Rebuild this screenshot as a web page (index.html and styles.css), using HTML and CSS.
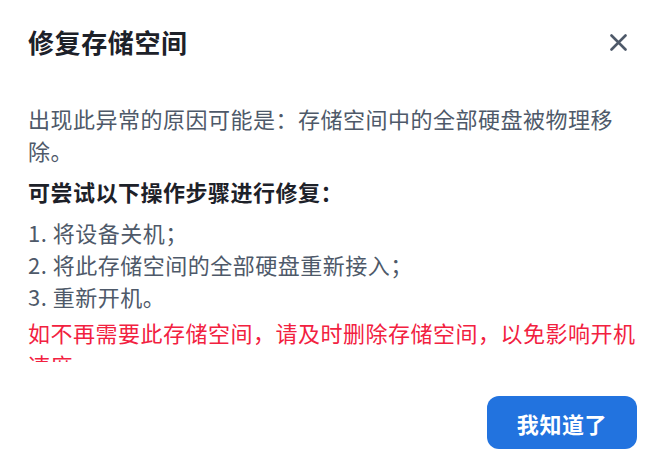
FILE: index.html
```html
<!DOCTYPE html>
<html lang="zh-CN">
<head>
<meta charset="utf-8">
<link rel="stylesheet" href="styles.css">
</head>
<body>
<div class="dialog">
  <div class="header">
    <div class="title">修复存储空间</div>
    <button class="close" aria-label="关闭">
      <svg width="17" height="17" viewBox="0 0 17 17"><path d="M1.5 1.5L15.5 15.5M15.5 1.5L1.5 15.5" stroke="#4e5969" stroke-width="2.6" stroke-linecap="round"/></svg>
    </button>
  </div>
  <div class="body">
    <p class="desc">出现此异常的原因可能是：存储空间中的全部硬盘被物理移除。</p>
    <p class="subtitle">可尝试以下操作步骤进行修复：</p>
    <div class="steps">
      <div>1. 将设备关机；</div>
      <div>2. 将此存储空间的全部硬盘重新接入；</div>
      <div>3. 重新开机。</div>
    </div>
    <p class="warn">如不再需要此存储空间，请及时删除存储空间，以免影响开机速度。</p>
  </div>
  <div class="footer">
    <button class="ok">我知道了</button>
  </div>
</div>
</body>
</html>
```
FILE: styles.css
```css
html, body {
  margin: 0;
  padding: 0;
  background: #ffffff;
}
body {
  font-family: "Noto Sans CJK SC", "Noto Sans", sans-serif;
}
.dialog {
  width: 670px;
  height: 466px;
  display: flex;
  flex-direction: column;
  background: #ffffff;
}
.header {
  display: flex;
  align-items: center;
  justify-content: space-between;
  height: 40px;
  padding: 22px 43px 0 28px;
}
.title {
  font-size: 26px;
  font-weight: 700;
  color: #1d2129;
  letter-spacing: 0.6px;
  line-height: 40px;
}
.close {
  border: 0;
  background: none;
  padding: 0;
  width: 17px;
  height: 17px;
  display: flex;
  cursor: pointer;
}
.body {
  height: 260px;
  padding: 40px 28px 0 28px;
  overflow: hidden;
  font-size: 22px;
  line-height: 32px;
  letter-spacing: 0.5px;
  color: #4e5969;
}
.body p {
  margin: 0;
}
.desc {
  margin-bottom: 9px !important;
}
.subtitle {
  font-weight: 700;
  color: #1d2129;
  margin-bottom: 9px !important;
}
.steps {
  margin-bottom: 4px;
}
.warn {
  color: #f2213f;
}
.footer {
  display: flex;
  justify-content: flex-end;
  padding: 34px 33px 0 0;
}
.ok {
  width: 150px;
  height: 53px;
  border: 0;
  border-radius: 12px;
  background: #2273df;
  color: #ffffff;
  font-family: "Noto Sans CJK SC", sans-serif;
  font-size: 22px;
  font-weight: 700;
  letter-spacing: 0.6px;
  cursor: pointer;
}
```
